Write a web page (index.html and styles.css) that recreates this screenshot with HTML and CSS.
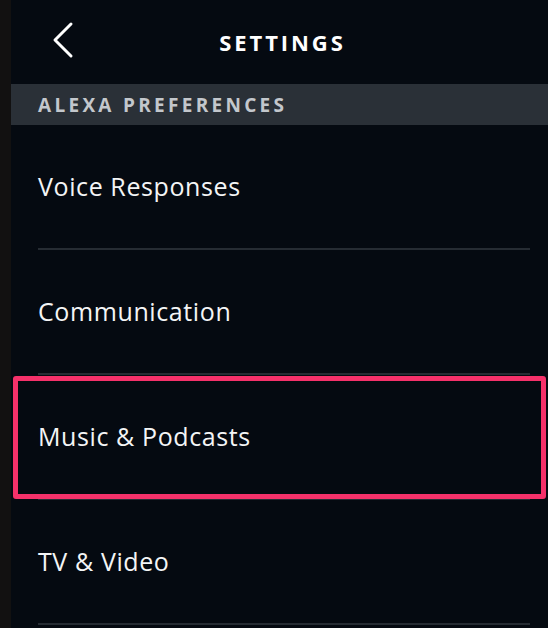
FILE: index.html
```html
<!doctype html>
<html lang="en">
  <head>
    <meta charset="UTF-8" />
    <meta name="viewport" content="width=device-width, initial-scale=1.0" />
    <title>Settings</title>
    <link rel="stylesheet" href="styles.css">
  </head>
  <body>
    <div class="edge"></div>
    <div class="screen">
      <header class="topbar">
        <button class="back" aria-label="Back">
          <svg width="24" height="38" viewBox="0 0 24 38">
            <path d="M19 3 L3 19 L19 35" fill="none" stroke="#fff" stroke-width="3" stroke-linecap="round" stroke-linejoin="round" />
          </svg>
        </button>
        <h1>SETTINGS</h1>
      </header>

      <div class="section-title">ALEXA PREFERENCES</div>

      <ul class="menu">
        <li class="menu-item"><span>Voice Responses</span></li>
        <li class="menu-item"><span>Communication</span></li>
        <li class="menu-item highlighted"><span>Music &amp; Podcasts</span></li>
        <li class="menu-item"><span>TV &amp; Video</span></li>
      </ul>
    </div>
  </body>
</html>
```

FILE: styles.css
```css
body {
  margin: 0;
  height: 628px;
  overflow: hidden;
  display: flex;
  background-color: #050a11;
  font-family: "Open Sans", "Noto Sans", sans-serif;
  color: #f4f5f6;
}
.edge {
  width: 11px;
  flex-shrink: 0;
  background-color: #121111;
}
.screen {
  flex: 1;
  display: flex;
  flex-direction: column;
}
.topbar {
  height: 84px;
  display: flex;
  align-items: center;
  justify-content: center;
  position: relative;
}
.back {
  position: absolute;
  left: 41px;
  top: 21px;
  padding: 0;
  border: none;
  background: none;
  cursor: pointer;
}
.topbar h1 {
  margin: 0 0 0 6px;
  font-size: 22px;
  font-weight: 700;
  letter-spacing: 2.9px;
  color: #ffffff;
}
.section-title {
  height: 41px;
  display: flex;
  align-items: center;
  padding-left: 27px;
  background-color: #2a3037;
  color: #c3c7cc;
  font-size: 19px;
  font-weight: 700;
  letter-spacing: 3.3px;
}
.menu {
  list-style: none;
  margin: 0;
  padding: 0 18px 0 27px;
}
.menu-item {
  height: 123px;
  display: flex;
  align-items: center;
  border-bottom: 2px solid #262c33;
  font-size: 25px;
  letter-spacing: 0.6px;
  position: relative;
}
.menu-item span {
  margin-top: -2px;
}
.menu-item.highlighted::after {
  content: "";
  position: absolute;
  left: -25px;
  right: -16px;
  top: 1px;
  bottom: -1px;
  border: 5px solid #f5316a;
  border-radius: 3px;
}
```
